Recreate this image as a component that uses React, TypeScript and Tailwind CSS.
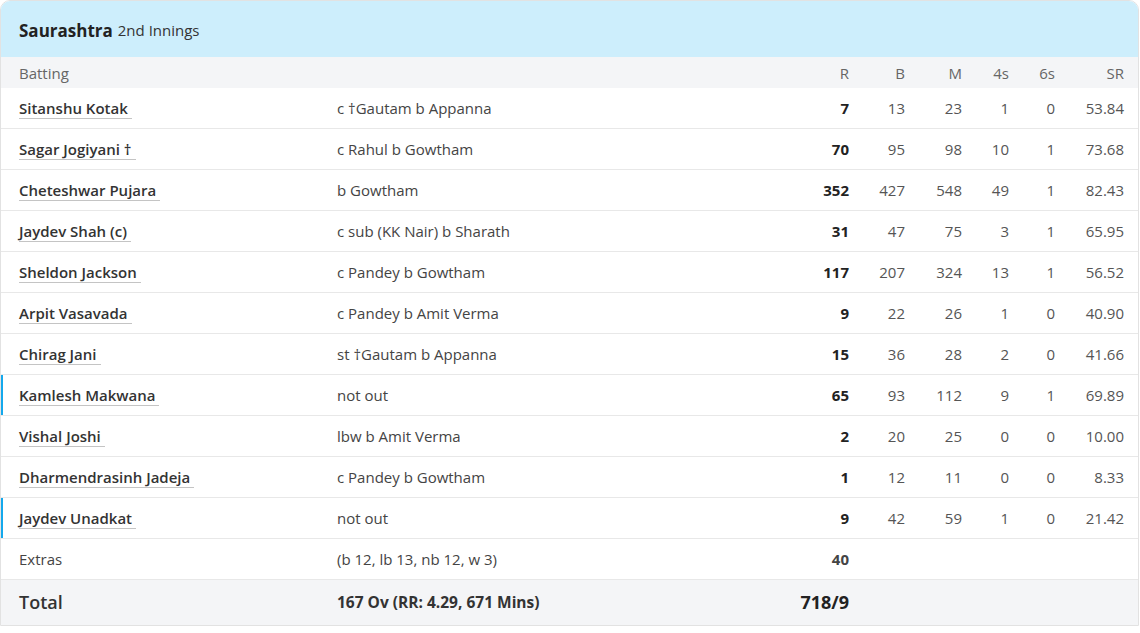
import React from "react";

type Batter = {
  name: string;
  dismissal: string;
  r: string;
  b: string;
  m: string;
  fours: string;
  sixes: string;
  sr: string;
  notOut?: boolean;
};

const batters: Batter[] = [
  { name: "Sitanshu Kotak", dismissal: "c \u2020Gautam b Appanna", r: "7", b: "13", m: "23", fours: "1", sixes: "0", sr: "53.84" },
  { name: "Sagar Jogiyani \u2020", dismissal: "c Rahul b Gowtham", r: "70", b: "95", m: "98", fours: "10", sixes: "1", sr: "73.68" },
  { name: "Cheteshwar Pujara", dismissal: "b Gowtham", r: "352", b: "427", m: "548", fours: "49", sixes: "1", sr: "82.43" },
  { name: "Jaydev Shah (c)", dismissal: "c sub (KK Nair) b Sharath", r: "31", b: "47", m: "75", fours: "3", sixes: "1", sr: "65.95" },
  { name: "Sheldon Jackson", dismissal: "c Pandey b Gowtham", r: "117", b: "207", m: "324", fours: "13", sixes: "1", sr: "56.52" },
  { name: "Arpit Vasavada", dismissal: "c Pandey b Amit Verma", r: "9", b: "22", m: "26", fours: "1", sixes: "0", sr: "40.90" },
  { name: "Chirag Jani", dismissal: "st \u2020Gautam b Appanna", r: "15", b: "36", m: "28", fours: "2", sixes: "0", sr: "41.66" },
  { name: "Kamlesh Makwana", dismissal: "not out", r: "65", b: "93", m: "112", fours: "9", sixes: "1", sr: "69.89", notOut: true },
  { name: "Vishal Joshi", dismissal: "lbw b Amit Verma", r: "2", b: "20", m: "25", fours: "0", sixes: "0", sr: "10.00" },
  { name: "Dharmendrasinh Jadeja", dismissal: "c Pandey b Gowtham", r: "1", b: "12", m: "11", fours: "0", sixes: "0", sr: "8.33" },
  { name: "Jaydev Unadkat", dismissal: "not out", r: "9", b: "42", m: "59", fours: "1", sixes: "0", sr: "21.42", notOut: true },
];

const rowGrid =
  "grid grid-cols-[318px_1fr_80px_56px_57px_47px_46px_69px] pl-[18px] pr-[14px] items-center";

const num = "text-right text-[15px] text-[#555]";

const BatterRow = ({ p }: { p: Batter }) => (
  <div
    className={`${rowGrid} h-[41px] pt-[1px] border-b border-[#e8e8e8] ${
      p.notOut ? "shadow-[inset_2px_0_0_#14a8ec]" : ""
    }`}
  >
    <div className="-mt-[1px]">
      <span className="border-b border-[#c4c4c4] pr-1 text-[15px] font-semibold text-[#333]">
        {p.name}
      </span>
    </div>
    <div className="text-[15px] text-[#444]">{p.dismissal}</div>
    <div className="text-right text-[15px] font-bold text-[#222]">{p.r}</div>
    <div className={num}>{p.b}</div>
    <div className={num}>{p.m}</div>
    <div className={num}>{p.fours}</div>
    <div className={num}>{p.sixes}</div>
    <div className={num}>{p.sr}</div>
  </div>
);

export default function App() {
  return (
    <div
      className="w-[1140px] h-[633px] bg-white"
      style={{ fontFamily: '"Open Sans", "Noto Sans", sans-serif' }}
    >
      <div className="w-[1139px] border border-[#e2e2e2] rounded-t-[10px] overflow-hidden">
        <div className="h-[56px] bg-[#cdeefc] flex items-center pl-[18px] pt-[3px]">
          <span className="text-[17px] font-bold text-[#222]">Saurashtra</span>
          <span className="ml-[5px] text-[15px] text-[#333]">2nd Innings</span>
        </div>
        <div className={`${rowGrid} h-[31px] bg-[#f4f5f7] text-[15px] text-[#666] pt-[2px]`}>
          <div>Batting</div>
          <div />
          <div className="text-right">R</div>
          <div className="text-right">B</div>
          <div className="text-right">M</div>
          <div className="text-right">4s</div>
          <div className="text-right">6s</div>
          <div className="text-right">SR</div>
        </div>
        {batters.map((p) => (
          <BatterRow key={p.name} p={p} />
        ))}
        <div className={`${rowGrid} h-[41px] pt-[1px] border-b border-[#e8e8e8]`}>
          <div className="text-[15px] text-[#444]">Extras</div>
          <div className="text-[15px] text-[#444]">(b 12, lb 13, nb 12, w 3)</div>
          <div className="text-right text-[15px] font-bold text-[#444]">40</div>
        </div>
        <div className={`${rowGrid} h-[45px] bg-[#f4f5f7]`}>
          <div className="text-[18px] font-semibold text-[#333]">Total</div>
          <div className="text-[15.5px] font-bold text-[#333]">
            167 Ov (RR: 4.29, 671 Mins)
          </div>
          <div className="text-right text-[18px] font-bold text-[#222]">718/9</div>
        </div>
      </div>
    </div>
  );
}
